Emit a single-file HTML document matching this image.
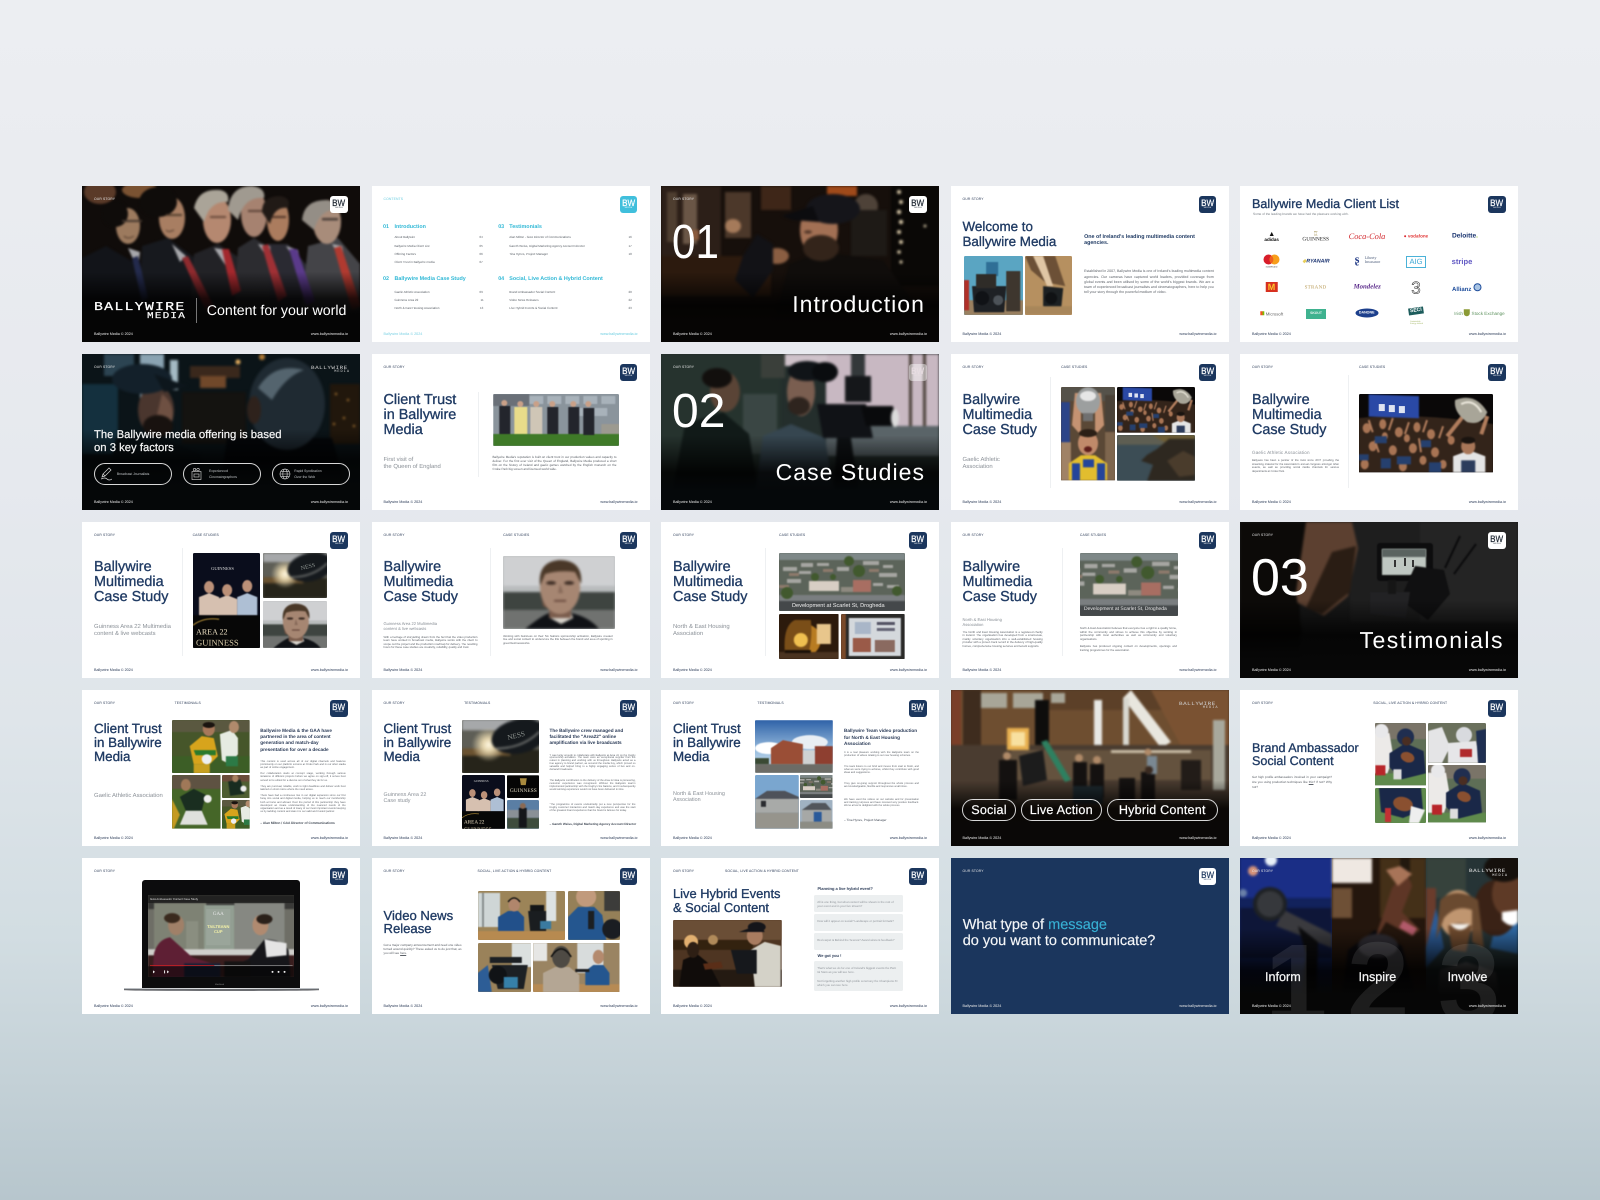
<!DOCTYPE html>
<html lang="en"><head><meta charset="utf-8"><title>Ballywire Media</title>
<style>
html,body{margin:0;padding:0}
body{width:1600px;height:1200px;overflow:hidden;position:relative;background:linear-gradient(180deg,#eceef2 0,#eaecf0 15%,#e6e9ee 40%,#dfe5ea 60%,#d2dde2 78%,#c4d1d7 90%,#b7c6cd 100%);font-family:"Liberation Sans",sans-serif;text-rendering:geometricPrecision}
.c{position:absolute;width:278px;height:156px;background:#fff;overflow:hidden;filter:blur(.28px);color:#1b365d}
.x1{left:82px}.x2{left:371.5px}.x3{left:661px}.x4{left:950.5px}.x5{left:1240px}
.y1{top:186px}.y2{top:354px}.y3{top:522px}.y4{top:690px}.y5{top:857.6px}
.t{position:absolute;white-space:nowrap;line-height:1}
.l{position:absolute;white-space:nowrap;line-height:1;top:12.3px;left:12px;font-size:3.4px;letter-spacing:.12px;color:#2c3c58}
.fl,.fr{position:absolute;white-space:nowrap;line-height:1;top:147.2px;font-size:3.7px;color:#2c3c58}
.fl{left:12px}.fr{right:12px}
.w .l,.w .fl,.w .fr{color:#e6e6e6}
.lg{position:absolute;left:248.4px;top:10px;width:17.3px;height:17.3px;background:#1b365d;border-radius:3px;color:#fff;text-align:center;overflow:hidden}
.lg b{display:block;font-weight:400;font-size:9.4px;line-height:9px;margin-top:2.2px;transform:scaleX(.86);-webkit-text-stroke:.2px currentColor}
.lg i{display:block;font-style:normal;font-size:2.1px;line-height:2.4px;letter-spacing:.22px;margin-top:.3px}
.lw{background:#fff;color:#1c2530}
.h{position:absolute;left:12px;margin-top:1.3px;font-weight:400;font-size:14.4px;line-height:15px;white-space:nowrap;color:#1f3a63;-webkit-text-stroke:.32px #1f3a63}
.h2{position:absolute;left:12px;top:32.2px;font-weight:400;font-size:13.4px;line-height:14px;white-space:nowrap;color:#1f3a63;-webkit-text-stroke:.32px #1f3a63}
.s{position:absolute;left:12px;font-size:5.9px;line-height:7px;color:#8a9097;white-space:nowrap}
.d{position:absolute;width:.4px;background:#eef0f2}
.bd{position:absolute;font-size:3.05px;line-height:4.3px;color:#5c6168;text-align:justify}
.sh{position:absolute;font-weight:700;font-size:4.7px;line-height:6.35px;color:#2c3c58;white-space:nowrap}
.p{position:absolute;border-radius:1.3px;display:block;overflow:hidden}
.ov{position:absolute;left:0;top:0;width:100%;height:100%}
.ph{position:absolute;left:0;top:0;width:278px;height:156px;display:block}
.num{position:absolute;left:11px;top:29.5px;color:#fff;font-size:48px;line-height:54px;transform-origin:left center}
.big{position:absolute;right:14px;top:104px;color:#fff;font-size:23px;line-height:28px;letter-spacing:1.05px;white-space:nowrap}
.wm{position:absolute;font-family:"Liberation Mono",monospace;white-space:nowrap;line-height:1;color:#cfcfcf;transform-origin:left center}
.pill{position:absolute;top:109.3px;height:21.4px;border:.6px solid #d8d8d8;border-radius:11px;box-sizing:border-box;color:#fff;white-space:nowrap}
.pt{position:absolute;left:22px;font-size:3.4px;line-height:5.4px;color:#c4c7ca;top:5.2px}
.pb{text-align:center;font-size:12.6px;line-height:20.6px;letter-spacing:.2px;-webkit-text-stroke:.2px #fff}
.ci{color:#2fb8d6;font-weight:700;font-size:5.4px}
.it{position:absolute;font-size:3px;line-height:1;white-space:nowrap;color:#5c6269}
.lo{position:absolute;line-height:1;white-space:nowrap;transform:translate(-50%,-50%)}
.bx{position:absolute;left:153px;width:88.5px;background:#eceff0;border-radius:1.5px;font-size:2.9px;line-height:4.1px;color:#8c9197;box-sizing:border-box;padding:5px 3.2px}
.lb{font-size:12.6px;color:#f2f2f2;-webkit-text-stroke:.25px #fff;top:113.7px}
</style></head><body>

<svg width="0" height="0" style="position:absolute">
<defs>
<linearGradient id="skyb" x1="0" y1="0" x2="0" y2="1"><stop offset="0" stop-color="#2f62a8"/><stop offset=".6" stop-color="#9cc0e0"/><stop offset="1" stop-color="#d6e4ee"/></linearGradient>
<radialGradient id="sun"><stop offset="0" stop-color="#fff8e2"/><stop offset=".35" stop-color="#e4d4ac"/><stop offset="1" stop-color="#e4d4ac" stop-opacity="0"/></radialGradient>
</defs>

<symbol id="ball" viewBox="0 0 64 45" preserveAspectRatio="xMidYMid slice">
<rect width="64" height="45" fill="#5e5e56"/>
<g style="filter:blur(1.2px)"><rect width="64" height="9" fill="#a6a8aa"/><rect y="25" width="64" height="20" fill="#26241a"/><rect y="24" width="40" height="6" fill="#6a5230"/><circle cx="22" cy="21" r="14" fill="url(#sun)"/><ellipse cx="47" cy="14" rx="23" ry="14" transform="rotate(-12 47 14)" fill="#15191d"/><path d="M28 24Q50 24 64 10" fill="none" stroke="#8a8c88" stroke-width="1.2"/></g>
<text x="38" y="17" font-size="6" fill="#8e9490" font-family="Liberation Serif" transform="rotate(-14 38 17)">NESS</text>
</symbol>

<symbol id="jack" viewBox="0 0 112 73" preserveAspectRatio="xMidYMid slice">
<rect width="112" height="73" fill="#b9bcbd"/>
<g style="filter:blur(1.4px)"><rect width="112" height="30" fill="#cfd0d2"/><rect y="36" width="112" height="18" fill="#3e4440"/><rect y="54" width="112" height="19" fill="#707270"/><path d="M22 73Q38 60 46 57L68 57Q86 61 96 73Z" fill="#101216"/><path d="M47 62L58 68L70 62L68 57H47Z" fill="#d8d4cc"/><rect x="46" y="44" width="22" height="18" fill="#7a5c4c"/><ellipse cx="57" cy="32" rx="20" ry="26" fill="#a68672"/><path d="M37 30Q34 6 56 4Q80 4 78 28L72 16Q56 14 42 18Z" fill="#4a3828"/><ellipse cx="48" cy="27" rx="5" ry="1.8" fill="#3a2a22"/><ellipse cx="66" cy="27" rx="5" ry="1.8" fill="#3a2a22"/><path d="M57 28L55 37H60Z" fill="#866858"/><rect x="51" y="44" width="12" height="1.6" fill="#5e3e34"/><path d="M37 34Q40 52 50 56L40 50Z" fill="#6e5040"/></g>
</symbol>

<symbol id="crowd" viewBox="0 0 134 78" preserveAspectRatio="xMidYMid slice">
<rect width="134" height="78" fill="#0a0808"/>
<g style="filter:blur(.7px)">
<path d="M0 24Q60 18 134 30V78H0Z" fill="#33241a"/>
<g fill="#a87454"><ellipse cx="8" cy="34" rx="4" ry="5"/><ellipse cx="24" cy="30" rx="3.5" ry="5"/><ellipse cx="40" cy="38" rx="4" ry="5"/><ellipse cx="58" cy="33" rx="3.5" ry="5"/><ellipse cx="72" cy="40" rx="4" ry="5"/><ellipse cx="14" cy="52" rx="4" ry="5"/><ellipse cx="34" cy="56" rx="4" ry="5"/><ellipse cx="54" cy="54" rx="4" ry="5"/><ellipse cx="76" cy="58" rx="4" ry="5"/><ellipse cx="92" cy="46" rx="3.5" ry="4.5"/><ellipse cx="6" cy="70" rx="4" ry="5"/><ellipse cx="44" cy="72" rx="4" ry="5"/><ellipse cx="26" cy="42" rx="3" ry="4"/><ellipse cx="64" cy="66" rx="3.5" ry="4.5"/><ellipse cx="84" cy="70" rx="3.5" ry="4.5"/><ellipse cx="48" cy="44" rx="3" ry="4"/></g>
<g stroke="#b07c5c" stroke-width="2" fill="none"><path d="M14 38L10 26M30 36L34 24M46 40L50 28M64 38L68 26M80 44L84 32M20 58L16 46M62 58L60 44"/></g>
<g fill="#26406e"><rect x="16" y="42" width="12" height="7"/><rect x="62" y="46" width="10" height="7"/><rect x="0" y="60" width="10" height="6"/><rect x="38" y="62" width="14" height="8"/><rect x="70" y="68" width="12" height="10"/><rect x="22" y="64" width="10" height="10"/></g>
<path d="M88 42L104 22M122 40L128 22" stroke="#b07c5c" stroke-width="4" fill="none"/>
<path d="M94 78V62L110 56L126 62V78Z" fill="#e4e4e4"/><rect x="102" y="66" width="14" height="12" fill="#2c3c5c"/><ellipse cx="109" cy="52" rx="7" ry="8" fill="#a87658"/><ellipse cx="109" cy="46" rx="7" ry="3.5" fill="#1a1410"/>
<rect x="10" y="0" width="50" height="22" fill="#2a49a6" transform="skewY(2)"/>
<path d="M96 6Q116 -2 128 18Q122 32 108 28Q94 18 96 6Z" fill="#a8a598"/><path d="M102 10Q114 4 122 18" stroke="#ece8dc" stroke-width="2" fill="none"/>
</g>
<g fill="#fff" opacity=".85"><rect x="20" y="10" width="6" height="7"/><rect x="30" y="11" width="6" height="7"/><rect x="40" y="12" width="6" height="7"/></g>
</symbol>

<symbol id="player" viewBox="0 0 54 93" preserveAspectRatio="xMidYMid slice">
<rect width="54" height="93" fill="#5a4836"/>
<g style="filter:blur(.7px)">
<rect width="54" height="14" fill="#55524a"/><rect width="9" height="50" y="15" fill="#2c4488"/><rect x="0" y="55" width="10" height="38" fill="#a08266"/><rect x="44" y="45" width="10" height="48" fill="#7e664e"/><rect x="44" y="8" width="10" height="36" fill="#4a4238"/>
<path d="M11 38L14 6H20L20 48ZM43 38L40 6H34L34 48Z" fill="#c49272"/>
<ellipse cx="27" cy="14" rx="12" ry="14" fill="#9c9f9f"/><ellipse cx="27" cy="9" rx="8" ry="5" fill="#e6e6e6"/><rect x="22" y="26" width="10" height="8" fill="#707070"/>
<ellipse cx="27" cy="56" rx="10" ry="12" fill="#c08a6a"/><ellipse cx="27" cy="46" rx="9" ry="4" fill="#2b1f16"/><ellipse cx="27" cy="62" rx="4" ry="3" fill="#5e1e1a"/>
<path d="M8 93V76L20 68H34L46 76V93Z" fill="#e2bd2e"/><rect x="11" y="76" width="8" height="17" fill="#24459a"/><rect x="36" y="76" width="8" height="17" fill="#24459a"/><rect x="22" y="72" width="11" height="8" fill="#24459a"/>
</g></symbol>

<symbol id="cliff" viewBox="0 0 78 46" preserveAspectRatio="xMidYMid slice">
<rect width="78" height="46" fill="#3c4d55"/>
<g style="filter:blur(1px)"><rect width="78" height="10" fill="#5e5e52"/><path d="M34 0H78V12H56Z" fill="#6e5e36"/><path d="M52 4L40 14L30 20L24 26L36 30L30 46H78V4Z" fill="#2e2820"/><path d="M50 26L66 16L78 22V40L62 42Z" fill="#4a3c2c"/></g></symbol>

<symbol id="panel" viewBox="0 0 67 95" preserveAspectRatio="xMidYMid slice">
<rect width="67" height="95" fill="#0a0d1c"/>
<g style="filter:blur(.6px)">
<g fill="#d6c0b0"><path d="M6 62V44L16 40L26 44V62Z"/><path d="M24 62V46L34 42L44 46V62Z"/><path d="M44 62V44L54 40L64 44V62Z" fill="#aebfd4"/></g>
<g fill="#bb9078"><ellipse cx="16" cy="34" rx="5" ry="6"/><ellipse cx="34" cy="37" rx="5" ry="6"/><ellipse cx="54" cy="33" rx="5" ry="6"/></g>
<rect y="62" width="67" height="33" fill="#070707"/><path d="M0 72Q10 64 26 66" stroke="#9a7a30" stroke-width="1.2" fill="none"/></g>
<text x="18" y="17" font-size="4.6" fill="#ddd" font-family="Liberation Serif">GUINNESS</text>
<text x="3" y="81" font-size="8" fill="#e8dcc0" font-family="Liberation Serif">AREA 22</text>
<text x="3" y="92" font-size="8.6" fill="#d4c8a6" font-family="Liberation Serif">GUINNESS</text>
</symbol>

<symbol id="aerial" viewBox="0 0 126 58" preserveAspectRatio="xMidYMid slice">
<rect width="126" height="58" fill="#5c645a"/>
<g style="filter:blur(.7px)">
<rect width="126" height="7" fill="#7e8888"/><rect y="42" width="126" height="6" fill="#7a7e80"/><rect y="48" width="126" height="10" fill="#44484a"/>
<g fill="#a6a6a2"><rect x="4" y="14" width="14" height="4"/><rect x="22" y="10" width="12" height="4"/><rect x="58" y="14" width="12" height="4"/><rect x="84" y="8" width="16" height="4"/><rect x="100" y="20" width="18" height="4"/><rect x="8" y="26" width="14" height="4"/><rect x="38" y="10" width="12" height="3"/><rect x="104" y="12" width="10" height="3"/><rect x="94" y="30" width="10" height="3"/><rect x="108" y="32" width="12" height="3"/><rect x="20" y="18" width="12" height="3"/></g>
<g fill="#8e7a6c"><rect x="10" y="20" width="10" height="3"/><rect x="44" y="16" width="10" height="3"/><rect x="90" y="16" width="10" height="3"/><rect x="0" y="32" width="10" height="3"/></g>
<g fill="#41592e"><circle cx="8" cy="40" r="6"/><circle cx="80" cy="18" r="6"/><circle cx="70" cy="8" r="5"/><circle cx="36" cy="24" r="4"/><circle cx="118" cy="38" r="5"/><circle cx="54" cy="24" r="3"/></g>
<rect x="30" y="28" width="30" height="10" fill="#d8cec4"/><rect x="74" y="27" width="18" height="12" fill="#a86e62"/><rect x="62" y="34" width="12" height="5" fill="#8e8a80"/></g></symbol>

<symbol id="kettle" viewBox="0 0 60 45" preserveAspectRatio="xMidYMid slice">
<rect width="60" height="45" fill="#2c1a0c"/><g style="filter:blur(.8px)"><circle cx="26" cy="26" r="16" fill="#b87c22"/><rect x="38" y="10" width="14" height="20" fill="#e8c68c"/><path d="M6 38Q4 12 16 6L32 6Q34 22 30 38Z" fill="#7a4e18"/><circle cx="22" cy="26" r="7" fill="#f0c050"/><rect x="0" y="38" width="60" height="7" fill="#4a3320"/><rect x="6" y="36" width="26" height="3" fill="#1a1008"/></g></symbol>

<symbol id="sign" viewBox="0 0 64 45" preserveAspectRatio="xMidYMid slice">
<rect width="64" height="45" fill="#2a2a28"/><g style="filter:blur(.6px)"><rect x="8" y="4" width="52" height="38" fill="#d4d8dc"/><rect x="12" y="24" width="18" height="14" fill="#9a5a48"/><rect x="34" y="26" width="20" height="12" fill="#8a6a60"/><rect x="14" y="8" width="16" height="12" fill="#a9b6c8"/><rect x="36" y="8" width="18" height="3" fill="#556"/><rect x="36" y="14" width="18" height="3" fill="#667"/><rect x="0" y="0" width="5" height="45" fill="#7a4a2a"/></g></symbol>

<symbol id="gaa1" viewBox="0 0 78 53" preserveAspectRatio="xMidYMid slice">
<rect width="78" height="53" fill="#46562a"/>
<g style="filter:blur(.6px)"><rect width="78" height="12" fill="#5a5840"/><rect y="36" width="78" height="17" fill="#3c5e26"/>
<path d="M48 14L60 10L66 18V34L58 44L50 40Z" fill="#e6ebe2"/><ellipse cx="62" cy="7" rx="5" ry="6" fill="#b08a6c"/><rect x="54" y="36" width="12" height="10" fill="#2c7a46"/>
<path d="M18 26L30 16L42 18L46 36L38 44H22Z" fill="#d7a41c"/><path d="M22 30L44 30L44 35L24 35Z" fill="#2a7a2c"/><ellipse cx="37" cy="9" rx="6" ry="7" fill="#a8785a"/><ellipse cx="37" cy="5" rx="6" ry="3" fill="#1a1410"/><rect x="22" y="44" width="16" height="9" fill="#c8a020"/><circle cx="35" cy="39" r="5" fill="#eceff2"/></g></symbol>

<symbol id="gaa2" viewBox="0 0 49 54" preserveAspectRatio="xMidYMid slice">
<rect width="49" height="54" fill="#456628"/><g style="filter:blur(.6px)"><rect width="49" height="14" fill="#5e5242"/><path d="M8 22L22 14L34 20L30 36L14 36Z" fill="#1a2e20"/><ellipse cx="14" cy="10" rx="5" ry="6" fill="#a07858"/><path d="M14 36L30 36L36 50L8 50Z" fill="#dfe0dc"/><circle cx="36" cy="24" r="4" fill="#eee"/><path d="M0 24L8 40L2 54H0Z" fill="#c49a20"/></g></symbol>

<symbol id="gaa3" viewBox="0 0 27 26" preserveAspectRatio="xMidYMid slice">
<rect width="27" height="26" fill="#4e5e32"/><g style="filter:blur(.5px)"><rect width="27" height="8" fill="#6a4c3a"/><path d="M6 8L18 6L22 20L8 22Z" fill="#182c20"/><ellipse cx="13" cy="5" rx="3" ry="3.6" fill="#a88060"/><circle cx="21" cy="15" r="3" fill="#eee"/></g></symbol>

<symbol id="fb" viewBox="0 0 58 62" preserveAspectRatio="xMidYMid slice">
<rect width="58" height="62" fill="#5e6e56"/><g style="filter:blur(.5px)"><rect width="58" height="16" fill="#7a7468"/><rect y="50" width="58" height="12" fill="#5f8a4c"/>
<path d="M0 10H18L22 34L16 50H0Z" fill="#eceae8"/><circle cx="10" cy="8" r="7" fill="#e8e8ea"/><rect x="4" y="42" width="10" height="10" fill="#b8262a"/>
<path d="M18 30L34 20L52 28L54 50L30 56L18 44Z" fill="#1a2848"/><circle cx="34" cy="14" r="8.5" fill="#202e50"/><circle cx="35" cy="18" r="4.5" fill="#4a2e22"/><ellipse cx="36" cy="34" rx="7" ry="5" fill="#8a5030" transform="rotate(20 36 34)"/><rect x="22" y="46" width="8" height="10" fill="#ddd"/></g></symbol>

<symbol id="vid1" viewBox="0 0 87 49" preserveAspectRatio="xMidYMid slice">
<rect width="87" height="49" fill="#9c8458"/><g style="filter:blur(.5px)"><rect x="0" y="2" width="22" height="34" fill="#cfd6d6"/><rect x="4" y="2" width="2" height="34" fill="#8a9090"/><rect x="68" y="0" width="10" height="30" fill="#dde2e2"/><rect y="40" width="87" height="9" fill="#b78a50"/>
<path d="M20 40V26L30 20H40L46 26V40Z" fill="#22508a"/><ellipse cx="36" cy="14" rx="5.6" ry="6.5" fill="#b0866c"/><path d="M30 11Q36 3 42 11" stroke="#111" stroke-width="1.4" fill="none"/>
<path d="M50 20H68V40H52Z" fill="#1a1d20"/><rect x="52" y="14" width="14" height="6" fill="#141618"/><rect x="62" y="30" width="11" height="8" fill="#3a7aa0"/></g></symbol>

<symbol id="vid2" viewBox="0 0 52 49" preserveAspectRatio="xMidYMid slice">
<rect width="52" height="49" fill="#958058"/><g style="filter:blur(.5px)"><rect x="36" width="16" height="20" fill="#3c3c3a"/><path d="M0 49V26L10 16H26L34 24L38 49Z" fill="#24568f"/><ellipse cx="18" cy="6" rx="10" ry="10" fill="#c19a7c"/><rect x="20" y="20" width="6" height="18" fill="#1c1f22"/><circle cx="44" cy="38" r="10" fill="#1a1d22"/></g></symbol>

<symbol id="vid3" viewBox="0 0 54 49" preserveAspectRatio="xMidYMid slice">
<rect width="54" height="49" fill="#9a825a"/><g style="filter:blur(.5px)"><rect x="34" width="20" height="24" fill="#dbe0df"/><path d="M0 30L10 22L14 49H0Z" fill="#2d5d96"/><path d="M12 14H44V20H12ZM14 22H50L46 46H20Z" fill="#1c2024"/><circle cx="20" cy="32" r="9" fill="#101316"/><rect x="26" y="34" width="14" height="11" fill="#3680a8"/></g></symbol>

<symbol id="vid4" viewBox="0 0 86 49" preserveAspectRatio="xMidYMid slice">
<rect width="86" height="49" fill="#9a8462"/><g style="filter:blur(.5px)"><rect x="44" width="26" height="30" fill="#d8dcdc"/><rect y="0" width="14" height="18" fill="#e6e6e4"/><rect y="41" width="86" height="8" fill="#b68a54"/><path d="M10 49V30L22 24H36L46 32V49Z" fill="#b4a694"/><ellipse cx="28" cy="14" rx="9" ry="11" fill="#4e4a44"/><path d="M18 14Q28 -2 38 14" stroke="#111" stroke-width="1.5" fill="none"/>
<path d="M52 42V28L60 22H70L76 30V42Z" fill="#24568f"/><ellipse cx="65" cy="14" rx="5.5" ry="7" fill="#b48a6e"/><rect x="42" y="26" width="14" height="3" fill="#1d1f22"/></g></symbol>
</svg>

<!-- R1 -->
<div class="c x1 y1 w">
<svg class="ph" viewBox="0 0 278 156"><rect width="278" height="156" fill="#100c0a"/>
<g style="filter:blur(1px)">
<ellipse cx="18" cy="6" rx="16" ry="12" fill="#5a3a28"/><ellipse cx="58" cy="4" rx="18" ry="8" fill="#7a5232"/>
<path d="M0 156V72L24 60L58 80L92 156Z" fill="#121419"/>
<path d="M55 156L60 60L86 52L118 76L142 156Z" fill="#17191e"/>
<path d="M105 156L112 68L136 58L170 80L186 156Z" fill="#222226"/>
<path d="M150 156L156 62L172 52L202 70L226 156Z" fill="#2c2c30"/>
<path d="M190 156L186 58L206 58L236 92L246 156Z" fill="#2a2a32"/>
<path d="M216 156L226 60L256 52L278 78V156Z" fill="#444448"/>
<path d="M46 62L58 66L56 84Z M90 58L104 70L98 76Z M132 62L146 64L144 80Z M176 58L188 60L190 78Z M204 60L216 64L220 84Z M250 58L260 60L264 82Z" fill="#a8a8ac"/>
<path d="M50 72L56 70L66 112L60 116Z" fill="#232a4c"/>
<path d="M100 72L106 70L134 125L126 130Z" fill="#8e2a2e"/><path d="M140 63L147 63L159 105L150 110Z" fill="#a3282d"/><path d="M180 60L186 58L205 110L196 116Z" fill="#a03035"/><path d="M207 63L215 63L233 115L224 120Z" fill="#5a3a8a"/><path d="M252 62L259 60L279 120L270 125Z" fill="#b03a30"/>
<ellipse cx="46" cy="40" rx="12" ry="18" fill="#9c7a5e"/><ellipse cx="33" cy="28" rx="13" ry="13" fill="#0f0c0a"/><rect x="40" y="34" width="20" height="2" fill="#44372e"/><path d="M52 50Q46 54 42 50" stroke="#553d2e" fill="none"/>
<ellipse cx="90" cy="32" rx="13" ry="21" fill="#a87e62"/><ellipse cx="76" cy="16" rx="19" ry="15" fill="#0f0c0a"/><rect x="84" y="28" width="16" height="2" fill="#54402f"/><path d="M92 44Q86 47 84 44" stroke="#553d2e" fill="none"/>
<ellipse cx="135" cy="34" rx="14" ry="23" fill="#b58870"/><path d="M112 22Q116 2 138 4Q148 6 146 16Q128 14 122 36Z" fill="#aaa498"/><rect x="128" y="30" width="16" height="2" fill="#6a4c3c"/>
<ellipse cx="172" cy="28" rx="13" ry="23" fill="#a68270"/><path d="M146 24Q148 0 170 0Q184 2 182 12Q162 10 156 34Z" fill="#a09a90"/><rect x="166" y="24" width="14" height="2" fill="#5e4438"/>
<ellipse cx="196" cy="34" rx="11" ry="21" fill="#ab7c5e"/><path d="M180 26Q180 10 198 10Q210 12 206 22Q192 20 188 38Z" fill="#211a16"/><rect x="190" y="30" width="14" height="2" fill="#54382a"/>
<ellipse cx="245" cy="36" rx="14" ry="22" fill="#a88c7a"/><path d="M220 34Q222 14 244 14Q258 16 256 24Q238 22 232 44Z" fill="#948e86"/><rect x="240" y="32" width="16" height="2.4" fill="#4a3e38"/>
</g></svg>
<div class="ov" style="background:linear-gradient(180deg,rgba(0,0,0,0) 55%,rgba(0,0,0,.8) 72%,#050505 82%)"></div>
<div class="l">OUR STORY</div>
<div class="lg lw"><b>BW</b><i>MEDIA</i></div>
<div class="wm" style="left:12px;top:115px;font-size:12px;letter-spacing:1px;color:#fff;transform:scaleX(1.24);-webkit-text-stroke:.25px #fff">BALLYWIRE</div>
<div class="wm" style="left:65px;top:126px;font-size:9px;letter-spacing:1px;color:#fff;transform:scaleX(1.22);-webkit-text-stroke:.2px #fff">MEDIA</div>
<div class="d" style="left:114.4px;top:112px;height:25px;background:#777"></div>
<div class="t" style="left:124.8px;top:118px;font-size:14.2px;color:#fff">Content for your world</div>
<div class="fl">Ballywire Media © 2024</div><div class="fr">www.ballywiremedia.ie</div>
</div>

<div class="c x2 y1" style="color:#2fb8d6">
<div class="l" style="color:#6ccde0">CONTENTS</div>
<div class="lg" style="background:#40bfdc"><b>BW</b><i>MEDIA</i></div>
<div class="t ci" style="left:11.5px;top:39px">01</div><div class="t ci" style="left:23px;top:39px">Introduction</div>
<div class="it" style="left:23px;top:50.2px">About Ballywire</div><div class="it" style="left:108px;top:50.2px">04</div>
<div class="it" style="left:23px;top:58.5px">Ballywire Media Client List</div><div class="it" style="left:108px;top:58.5px">05</div>
<div class="it" style="left:23px;top:66.8px">Offering Factors</div><div class="it" style="left:108px;top:66.8px">06</div>
<div class="it" style="left:23px;top:75.1px">Client Trust in Ballywire media</div><div class="it" style="left:108px;top:75.1px">07</div>
<div class="t ci" style="left:11.5px;top:91.3px">02</div><div class="t ci" style="left:23px;top:91.3px">Ballywire Media Case Study</div>
<div class="it" style="left:23px;top:104.8px">Gaelic Athletic Association</div><div class="it" style="left:108px;top:104.8px">09</div>
<div class="it" style="left:23px;top:113px">Guinness Area 22</div><div class="it" style="left:109px;top:113px">11</div>
<div class="it" style="left:23px;top:121.2px">North &amp; East Housing Association</div><div class="it" style="left:108.5px;top:121.2px">13</div>
<div class="t ci" style="left:126.7px;top:38.7px">03</div><div class="t ci" style="left:137.8px;top:38.7px">Testimonials</div>
<div class="it" style="left:137.8px;top:50.2px">Alan Milton - GAA Director of Communications</div><div class="it" style="left:257px;top:50.2px">16</div>
<div class="it" style="left:137.8px;top:58.5px">Gareth Weiss, Digital Marketing Agency Account Director</div><div class="it" style="left:257px;top:58.5px">17</div>
<div class="it" style="left:137.8px;top:66.8px">Tina Hynes, Project Manager</div><div class="it" style="left:257px;top:66.8px">18</div>
<div class="t ci" style="left:126.7px;top:91px">04</div><div class="t ci" style="left:137.8px;top:91px">Social, Live Action &amp; Hybrid Content</div>
<div class="it" style="left:137.8px;top:104.8px">Brand Ambassador Social Content</div><div class="it" style="left:257px;top:104.8px">20</div>
<div class="it" style="left:137.8px;top:113px">Video News Releases</div><div class="it" style="left:257px;top:113px">22</div>
<div class="it" style="left:137.8px;top:121.2px">Live Hybrid Events &amp; Social Content</div><div class="it" style="left:257px;top:121.2px">23</div>
<div class="fl" style="color:#7ed2e4">Ballywire Media © 2024</div><div class="fr" style="color:#6ccde0">www.ballywiremedia.ie</div>
</div>

<div class="c x3 y1 w">
<svg class="ph" viewBox="0 0 278 156"><rect width="278" height="156" fill="#160f0b"/>
<g style="filter:blur(1.3px)">
<rect x="0" y="0" width="60" height="70" fill="#2c1f18"/><rect x="6" y="6" width="10" height="50" fill="#4e3e30"/><rect x="22" y="8" width="14" height="50" fill="#6a5646"/><rect x="64" y="6" width="26" height="46" fill="#4c382a"/><rect x="100" y="0" width="30" height="24" fill="#3e2618"/>
<rect x="166" y="0" width="30" height="10" fill="#a04a1a"/><circle cx="205" cy="20" r="12" fill="#4e4238"/><rect x="190" y="24" width="36" height="46" fill="#1e1a16"/>
<rect x="230" y="0" width="48" height="100" fill="#0a0806"/>
<g fill="#d8c8a8"><circle cx="238" cy="6" r="2"/><circle cx="240" cy="16" r="2"/><circle cx="238" cy="26" r="2.2"/><circle cx="240" cy="36" r="2.2"/><circle cx="238" cy="46" r="2"/><circle cx="240" cy="56" r="2"/><circle cx="238" cy="66" r="1.8"/><circle cx="240" cy="76" r="1.6"/><circle cx="262" cy="22" r="1.4"/><circle cx="264" cy="40" r="1.4"/></g>
<ellipse cx="72" cy="40" rx="8" ry="7" fill="#a57a5a"/><rect x="30" y="44" width="8" height="10" fill="#8a5a3c"/>
<rect y="70" width="110" height="40" fill="#2c1a0e"/>
<path d="M108 156L128 78L160 66L222 74L262 130V156Z" fill="#100d0b"/>
<ellipse cx="158" cy="44" rx="19" ry="27" fill="#a27054"/><ellipse cx="160" cy="62" rx="18" ry="13" fill="#33241a"/><ellipse cx="147" cy="46" rx="4" ry="1.6" fill="#4e3426"/>
<ellipse cx="172" cy="23" rx="27" ry="15" fill="#15151a"/><path d="M121 30L152 20L158 36L132 34Z" fill="#0c0c0f"/>
<ellipse cx="116" cy="70" rx="12" ry="8" fill="#8a5e42"/>
<path d="M82 70L96 48L112 58L112 84L92 112L74 94Z" fill="#121216"/>
</g></svg>
<div class="ov" style="background:linear-gradient(180deg,rgba(0,0,0,0) 55%,rgba(0,0,0,.8) 76%,#060504 88%)"></div>
<div class="l">OUR STORY</div><div class="lg lw"><b>BW</b><i>MEDIA</i></div>
<div class="num" style="transform:scaleX(.88)">01</div><div class="big">Introduction</div>
<div class="fl">Ballywire Media © 2024</div><div class="fr">www.ballywiremedia.ie</div>
</div>

<div class="c x4 y1">
<div class="l">OUR STORY</div><div class="lg"><b>BW</b><i>MEDIA</i></div>
<div class="h" style="top:32.7px;font-size:13.4px;line-height:14.7px">Welcome to<br>Ballywire Media</div>
<svg class="p" style="left:13px;top:70px;width:59.3px;height:59.3px" viewBox="0 0 59 59"><rect width="59" height="59" fill="#5aa5c2"/><g style="filter:blur(.6px)"><rect y="44" width="59" height="15" fill="#9a8060"/><rect x="0" y="24" width="5" height="30" fill="#b03028"/><rect x="42" y="15" width="14" height="40" fill="#3e362e"/><path d="M8 30H42L40 56H10Z" fill="#1e2125"/><rect x="22" y="6" width="12" height="14" fill="#2f6f96"/><rect x="12" y="18" width="20" height="14" fill="#2f2c28"/><circle cx="18" cy="42" r="7" fill="#101216"/><circle cx="34" cy="44" r="5" fill="#4c5258"/></g></svg>
<svg class="p" style="left:74px;top:70px;width:47.3px;height:59.3px" viewBox="0 0 47 59"><rect width="47" height="59" fill="#b69060"/><g style="filter:blur(.7px)"><path d="M0 0H30L40 30L20 26L6 14Z" fill="#6c5036"/><path d="M8 0L18 0L28 30L22 30Z" fill="#e0c6a4"/><path d="M18 30L38 32L36 52L18 50Z" fill="#1c2022"/><circle cx="26" cy="42" r="6" fill="#101214"/><path d="M0 58H47V50H0Z" fill="#a8865a"/></g></svg>
<div class="sh" style="left:133.6px;top:48px;font-size:5.35px;line-height:6.2px;color:#1f3a63">One of Ireland's leading multimedia content<br>agencies.</div>
<div class="bd" style="left:133.6px;top:83.4px;width:129.7px;font-size:3.55px;line-height:5.25px">Established in 2007, Ballywire Media is one of Ireland's leading multimedia content agencies. Our cameras have captured world leaders, provided coverage from global events and been utilised by some of the world's biggest brands. We are a team of experienced broadcast journalists and cinematographers, here to help you tell your story through the powerful medium of video.</div>
<div class="fl">Ballywire Media © 2024</div><div class="fr">www.ballywiremedia.ie</div>
</div>

<div class="c x5 y1">
<div class="lg"><b>BW</b><i>MEDIA</i></div>
<div class="t" style="left:12px;top:12.2px;font-size:12.6px;color:#1f3a63;-webkit-text-stroke:.32px #1f3a63">Ballywire Media Client List</div>
<div class="t" style="left:13px;top:27.4px;font-size:3.2px;color:#7c8288">Some of the leading brands we have had the pleasure working with.</div>
<div class="lo" style="left:31.7px;top:50.5px;font-size:4.6px;font-weight:700;color:#111;text-align:center;line-height:4px"><span style="display:block;font-size:7px;line-height:6px">▲</span>adidas</div>
<div class="lo" style="left:75.7px;top:50.5px;font-family:'Liberation Serif',serif;font-size:5.4px;color:#222;text-align:center"><span style="display:block;color:#9a8540;font-size:6px;line-height:6px">♖</span>GUINNESS</div>
<div class="lo" style="left:127px;top:51px;font-family:'Liberation Serif',serif;font-style:italic;font-size:8.4px;color:#d2282e">Coca-Cola</div>
<div class="lo" style="left:176px;top:50.5px;font-size:4.6px;font-weight:700;color:#e23a3a"><span style="color:#d8232a">●</span> vodafone</div>
<div class="lo" style="left:225px;top:50.7px;font-size:6.6px;font-weight:700;color:#17326e">Deloitte<span style="color:#86bc25">.</span></div>
<svg style="position:absolute;left:23px;top:68px" width="17" height="15" viewBox="0 0 17 15"><circle cx="5.5" cy="5.5" r="5" fill="#d81d2a"/><circle cx="11.5" cy="5.5" r="5" fill="#f79e1b"/><path d="M8.5 1.6A5 5 0 0 1 8.5 9.4A5 5 0 0 1 8.5 1.6Z" fill="#f0611f"/><text x="8.5" y="13.6" font-size="2.3" text-anchor="middle" fill="#333" font-family="Liberation Sans">mastercard</text></svg>
<div class="lo" style="left:76px;top:75.5px;font-size:5.2px;font-weight:700;font-style:italic;color:#17306e"><span style="color:#e8cf5a">◆</span>RYANAIR</div>
<div class="lo" style="left:127.5px;top:74.5px;font-family:'Liberation Serif',serif;font-size:4px;line-height:4.8px;color:#4a5a78;padding-left:10px">Liberty<br>Insurance<span style="position:absolute;left:0;top:-3px;font-size:12px;line-height:12px;color:#28408a;font-weight:700">ʂ</span></div>
<div class="lo" style="left:176px;top:75.5px;width:18px;height:10px;border:.6px solid #4ab2d8;color:#3fa8d4;font-size:7.6px;line-height:10px;text-align:center">AIG</div>
<div class="lo" style="left:222px;top:75.5px;font-size:7.6px;font-weight:700;color:#635bc4">stripe</div>
<div class="lo" style="left:31.5px;top:101.3px;width:12.5px;height:10px;background:#d7301f;color:#ffc72c;font-size:9px;font-weight:700;line-height:10px;text-align:center;overflow:hidden">M</div>
<div class="lo" style="left:75.5px;top:102px;font-family:'Liberation Serif',serif;font-size:5px;color:#b89a56;letter-spacing:.3px">STRAND</div>
<div class="lo" style="left:127.2px;top:102px;font-family:'Liberation Serif',serif;font-style:italic;font-weight:700;font-size:6.8px;color:#5a2a8a">Mondelez</div>
<div class="lo" style="left:176px;top:102px;font-size:17px;font-weight:400;color:#fff;-webkit-text-stroke:.5px #222">3</div>
<div class="lo" style="left:226.5px;top:101.5px;font-size:6px;font-weight:700;color:#1f4e9c">Allianz <span style="display:inline-block;width:6px;height:6px;border:.6px solid #1f4e9c;border-radius:50%;vertical-align:-.5px;background:#a8c4e4"></span></div>
<div class="lo" style="left:31.5px;top:127.5px;font-size:4.3px;color:#666"><span style="display:inline-block;width:4.8px;height:4.8px;background:linear-gradient(90deg,#f25022 50%,#7fba00 50%);vertical-align:-.6px"></span> Microsoft</div>
<div class="lo" style="left:76px;top:127.7px;width:20px;height:10px;background:#3fb28f;color:#e8f4f0;font-size:3.4px;font-weight:700;line-height:9px;text-align:center">SKOUT</div>
<div class="lo" style="left:126.7px;top:127px;width:23px;height:9px;border-radius:50%;background:#1c3f8c;color:#fff;font-size:3.6px;font-weight:700;line-height:9px;text-align:center">DANONE</div>
<div class="lo" style="left:176px;top:125px;width:15px;height:7px;background:#1d5c5c;color:#fff;font-size:5px;font-weight:700;line-height:7px;text-align:center;transform:translate(-50%,-50%) rotate(-8deg)">SECI</div>
<div class="t" style="left:170px;top:135px;font-size:2px;color:#a6b86a;line-height:2.3px">Sustainable<br>Energy Ireland</div>
<div class="lo" style="left:239.5px;top:127px;font-size:4.6px;color:#5f9360">Irish <span style="display:inline-block;width:6px;height:7.4px;background:#8b9a35;border-radius:0 0 3px 3px;vertical-align:-1.6px"></span> Stock Exchange</div>
<div class="fl">Ballywire Media © 2024</div><div class="fr">www.ballywiremedia.ie</div>
</div>

<!-- R2 -->
<div class="c x1 y2 w">
<svg class="ph" viewBox="0 0 278 156"><rect width="278" height="156" fill="#0b1418"/>
<g style="filter:blur(1.2px)">
<rect x="58" y="0" width="24" height="46" fill="#8aa3b2"/><rect x="22" y="0" width="30" height="22" fill="#2c4452"/><rect x="88" y="6" width="8" height="30" fill="#a4bac4"/>
<rect x="0" y="30" width="36" height="70" fill="#14303e"/><rect x="108" y="12" width="50" height="12" fill="#3a281c"/><rect x="118" y="22" width="26" height="12" fill="#70482a"/><circle cx="156" cy="8" r="2.5" fill="#e8b060"/><circle cx="180" cy="3" r="3" fill="#b47c36"/>
<rect x="100" y="38" width="64" height="52" fill="#141310"/>
<rect x="248" y="30" width="30" height="60" fill="#21170c"/>
<g fill="#dc9a40"><circle cx="252" cy="70" r="1"/><circle cx="262" cy="64" r="1"/><circle cx="272" cy="72" r="1"/><circle cx="266" cy="46" r="1"/><circle cx="254" cy="40" r="1"/></g>
<path d="M20 156L34 84L72 80L118 100L124 156Z" fill="#091014"/>
<ellipse cx="74" cy="56" rx="18" ry="25" fill="#4a362e"/><path d="M80 40Q94 50 90 68L82 82H70Z" fill="#6e5042"/><ellipse cx="76" cy="72" rx="15" ry="11" fill="#18120f"/>
<ellipse cx="60" cy="25" rx="30" ry="15" fill="#13202a"/><path d="M72 20L106 32L82 38Z" fill="#0d161c"/>
<path d="M135 156L145 84H250L270 156Z" fill="#04070a"/>
<ellipse cx="205" cy="50" rx="38" ry="46" fill="#1f2a32"/><path d="M176 34Q192 8 222 16Q204 22 190 46Z" fill="#54646e"/><ellipse cx="172" cy="56" rx="7" ry="14" fill="#2e221c"/>
</g></svg>
<div class="ov" style="background:linear-gradient(180deg,rgba(0,0,0,0) 48%,rgba(0,0,0,.75) 68%,#050708 85%)"></div>
<div class="l">OUR STORY</div>
<div class="wm" style="left:228.5px;top:11.7px;font-size:5px;letter-spacing:.4px;transform:scaleX(1.2)">BALLYWIRE</div><div class="wm" style="right:10px;top:17px;font-size:3.6px;letter-spacing:1px">MEDIA</div>
<div class="t" style="left:12px;top:74.5px;font-size:11.3px;line-height:13.3px;color:#f2f2f2;-webkit-text-stroke:.2px #fff">The Ballywire media offering is based<br>on 3 key factors</div>
<div class="pill" style="left:11.9px;width:78px"><svg style="position:absolute;left:6px;top:3px" width="11" height="14" viewBox="0 0 11 14" fill="none" stroke="#ddd" stroke-width=".7"><path d="M8 1L10 3L4 9L2 7ZM2 7L1 10L4 9M0 12Q4 10 6 12T11 12"/></svg><div class="pt" style="top:7.6px">Broadcast Journalists</div></div>
<div class="pill" style="left:101px;width:78px"><svg style="position:absolute;left:7px;top:4px" width="11" height="12" viewBox="0 0 11 12" fill="none" stroke="#ddd" stroke-width=".6"><rect x="1" y="3.5" width="9" height="8"/><circle cx="3.5" cy="1.6" r="1.3"/><circle cx="7" cy="1.6" r="1.3"/><rect x="3" y="6" width="5" height="3"/></svg><div class="pt" style="left:25px">Experienced<br>Cinematographers</div></div>
<div class="pill" style="left:189.8px;width:78px"><svg style="position:absolute;left:6px;top:4px" width="12" height="12" viewBox="0 0 12 12" fill="none" stroke="#ddd" stroke-width=".6"><circle cx="6" cy="6" r="5"/><ellipse cx="6" cy="6" rx="2.2" ry="5"/><path d="M1 6H11M1.8 3.4H10.2M1.8 8.6H10.2"/></svg><div class="pt" style="left:21.5px">Rapid Syndication<br>Over the Web</div></div>
<div class="fl">Ballywire Media © 2024</div><div class="fr">www.ballywiremedia.ie</div>
</div>

<div class="c x2 y2">
<div class="l">OUR STORY</div><div class="lg"><b>BW</b><i>MEDIA</i></div>
<div class="h" style="top:37.5px">Client Trust<br>in Ballywire<br>Media</div>
<div class="d" style="left:106px;top:38px;height:85px"></div>
<svg class="p" style="left:121px;top:40px;width:126.6px;height:52px" viewBox="0 0 126 52"><rect width="126" height="52" fill="#8a949c"/><g style="filter:blur(.6px)"><g fill="#a8b2ba"><rect x="36" y="2" width="14" height="8"/><rect x="54" y="2" width="14" height="8"/><rect x="72" y="2" width="14" height="8"/><rect x="90" y="2" width="14" height="8"/><rect x="108" y="2" width="14" height="8"/><rect x="80" y="14" width="14" height="8"/><rect x="100" y="14" width="14" height="8"/></g><rect y="0" width="36" height="12" fill="#6a7078"/><rect x="108" y="30" width="18" height="12" fill="#9c9a90"/><rect y="40" width="126" height="12" fill="#3f7a28"/>
<g fill="#23252c"><rect x="6" y="12" width="11" height="28"/><rect x="54" y="13" width="11" height="27"/><rect x="75" y="13" width="11" height="27"/><rect x="90" y="14" width="11" height="27"/></g><rect x="21" y="13" width="13" height="27" fill="#e8dc8a"/><rect x="37" y="13" width="12" height="27" fill="#cfc6b6"/>
<g fill="#c9a088"><circle cx="11" cy="9" r="3"/><circle cx="27" cy="10" r="3"/><circle cx="43" cy="10" r="3"/><circle cx="59" cy="10" r="3"/><circle cx="80" cy="10" r="3"/><circle cx="95" cy="10" r="3"/></g></g></svg>
<div class="bd" style="left:121px;top:100.5px;width:124px">Ballywire Media's reputation is built on client trust in our production values and capacity to deliver. For the first ever visit of the Queen of England, Ballywire Media produced a short film on the history of Ireland and gaelic games watched by the English monarch on the Croke Park big screen and licensed world wide.</div>
<div class="s" style="top:102.5px">First visit of<br>the Queen of England</div>
<div class="fl">Ballywire Media © 2024</div><div class="fr">www.ballywiremedia.ie</div>
</div>

<div class="c x3 y2 w">
<svg class="ph" viewBox="0 0 278 156"><rect width="278" height="156" fill="#242e2c"/>
<g style="filter:blur(1.2px)">
<rect x="0" y="0" width="120" height="156" fill="#26332e"/><rect x="165" y="0" width="113" height="90" fill="#c8b8c2"/><rect x="122" y="0" width="44" height="12" fill="#cfc2ca"/><rect x="100" y="0" width="24" height="24" fill="#3a3f3a"/>
<rect x="248" y="0" width="3" height="80" fill="#4a4038"/><rect x="262" y="0" width="3" height="80" fill="#4a4038"/><rect x="165" y="72" width="113" height="30" fill="#5a6468"/>
<rect x="82" y="40" width="34" height="60" fill="#3a4644"/>
<path d="M8 156L24 70L62 58L88 80L100 156Z" fill="#111a18"/><ellipse cx="64" cy="38" rx="15" ry="20" fill="#5a4436"/><ellipse cx="56" cy="24" rx="15" ry="10" fill="#120f0d"/>
<path d="M92 156L102 82L130 70L164 84L176 156Z" fill="#364650"/><ellipse cx="140" cy="38" rx="14" ry="24" fill="#7a5e50"/><ellipse cx="138" cy="52" rx="11" ry="9" fill="#2e241e"/><ellipse cx="146" cy="17" rx="19" ry="10" fill="#101418"/>
<ellipse cx="164" cy="18" rx="13" ry="10" fill="#0a0c0f"/><rect x="190" y="0" width="14" height="22" fill="#33383a"/><rect x="184" y="22" width="26" height="26" fill="#15171a"/>
<path d="M156 50H205L212 84H162Z" fill="#101216"/><path d="M200 52H232L236 72H205Z" fill="#090a0c"/><ellipse cx="234" cy="64" rx="4" ry="9" fill="#dcdcdc"/><path d="M176 84L190 84L200 156H172Z" fill="#0d1012"/>
</g></svg>
<div class="ov" style="background:linear-gradient(180deg,rgba(0,0,0,0) 52%,rgba(0,0,0,.85) 76%,#05080a 88%)"></div>
<div class="l">OUR STORY</div><div class="lg" style="background:rgba(255,255,255,.45);color:#e8dde2"><b>BW</b><i>MEDIA</i></div>
<div class="num" style="top:30.5px">02</div><div class="big">Case Studies</div>
<div class="fl">Ballywire Media © 2024</div><div class="fr">www.ballywiremedia.ie</div>
</div>

<div class="c x4 y2">
<div class="l">OUR STORY</div><div class="l" style="left:110.6px">CASE STUDIES</div><div class="lg"><b>BW</b><i>MEDIA</i></div>
<div class="h" style="top:37.5px">Ballywire<br>Multimedia<br>Case Study</div>
<div class="d" style="left:99.9px;top:22.7px;height:111px"></div>
<div class="s" style="top:102.5px">Gaelic Athletic<br>Association</div>
<svg class="p" style="left:110.6px;top:33.3px;width:54px;height:93.4px"><use href="#player"/></svg>
<svg class="p" style="left:166px;top:33.3px;width:78.2px;height:45.7px"><use href="#crowd"/></svg>
<svg class="p" style="left:166px;top:81px;width:78.2px;height:45.7px"><use href="#cliff"/></svg>
<div class="fl">Ballywire Media © 2024</div><div class="fr">www.ballywiremedia.ie</div>
</div>

<div class="c x5 y2">
<div class="l">OUR STORY</div><div class="l" style="left:119px">CASE STUDIES</div><div class="lg"><b>BW</b><i>MEDIA</i></div>
<div class="h" style="top:37.5px">Ballywire<br>Multimedia<br>Case Study</div>
<div class="d" style="left:108.3px;top:21px;height:113px"></div>
<div class="s" style="top:97.2px;font-size:4.6px;line-height:4.6px;letter-spacing:.15px">Gaelic Athletic Association</div>
<div class="bd" style="left:12px;top:105.3px;width:87px;font-size:2.7px;line-height:3.5px">Ballywire has been a partner of the GAA since 2007 providing the streaming material for the Association's annual congress amongst other events, as well as providing social media channels for various departments at Croke Park.</div>
<svg class="p" style="left:119.3px;top:40.3px;width:134px;height:78.4px"><use href="#crowd"/></svg>
<div class="fl">Ballywire Media © 2024</div><div class="fr">www.ballywiremedia.ie</div>
</div>

<!-- R3 -->
<div class="c x1 y3">
<div class="l">OUR STORY</div><div class="l" style="left:110.6px">CASE STUDIES</div><div class="lg"><b>BW</b><i>MEDIA</i></div>
<div class="h" style="top:37.2px">Ballywire<br>Multimedia<br>Case Study</div>
<div class="d" style="left:99.9px;top:26px;height:108px"></div>
<div class="s" style="top:102.2px">Guinness Area 22 Multimedia<br>content &amp; live webcasts</div>
<svg class="p" style="left:111px;top:31px;width:67.3px;height:95.3px"><use href="#panel"/></svg>
<svg class="p" style="left:180.6px;top:31px;width:64.4px;height:45.3px"><use href="#ball"/></svg>
<svg class="p" style="left:180.6px;top:79px;width:64.4px;height:47.3px"><use href="#jack"/></svg>
<div class="fl">Ballywire Media © 2024</div><div class="fr">www.ballywiremedia.ie</div>
</div>

<div class="c x2 y3">
<div class="l">OUR STORY</div><div class="l" style="left:131.6px">CASE STUDIES</div><div class="lg"><b>BW</b><i>MEDIA</i></div>
<div class="h" style="top:37.2px">Ballywire<br>Multimedia<br>Case Study</div>
<div class="d" style="left:118.6px;top:26px;height:108px"></div>
<div class="s" style="top:100.3px;font-size:4.1px;line-height:4.7px">Guinness Area 22 Multimedia<br>content &amp; live webcasts</div>
<div class="bd" style="left:12px;top:113.5px;width:94px;font-size:2.8px;line-height:3.5px">With a heritage of storytelling drawn from the fact that the video production team have worked in broadcast media, Ballywire works with the client to scope out the project and the production roadmap for delivery. The resulting hours for these case studies are creativity, reliability, quality and trust.</div>
<svg class="p" style="left:131.6px;top:34.3px;width:112.2px;height:73px"><use href="#jack"/></svg>
<div class="bd" style="left:131.6px;top:113.2px;width:109.5px;font-size:2.8px;line-height:3.2px">Working with Guinness on their Six Nations sponsorship activation, Ballywire created live and social content to underscore the link between the brand and area of sporting in great Guinnessworks.</div>
<div class="fl">Ballywire Media © 2024</div><div class="fr">www.ballywiremedia.ie</div>
</div>

<div class="c x3 y3">
<div class="l">OUR STORY</div><div class="l" style="left:118px">CASE STUDIES</div><div class="lg"><b>BW</b><i>MEDIA</i></div>
<div class="h" style="top:37.2px">Ballywire<br>Multimedia<br>Case Study</div>
<div class="d" style="left:103.7px;top:26px;height:108px"></div>
<div class="s" style="top:102.2px">North &amp; East Housing<br>Association</div>
<svg class="p" style="left:118px;top:31px;width:126px;height:58px"><use href="#aerial"/></svg>
<div class="t" style="left:131px;top:81.9px;font-size:5.6px;color:#eee">Development at Scarlet St, Drogheda</div>
<svg class="p" style="left:118px;top:91.7px;width:59.6px;height:45px"><use href="#kettle"/></svg>
<svg class="p" style="left:180.3px;top:91.7px;width:63.7px;height:45px"><use href="#sign"/></svg>
<div class="fl">Ballywire Media © 2024</div><div class="fr">www.ballywiremedia.ie</div>
</div>

<div class="c x4 y3">
<div class="l">OUR STORY</div><div class="l" style="left:129.4px">CASE STUDIES</div><div class="lg"><b>BW</b><i>MEDIA</i></div>
<div class="h" style="top:37.2px">Ballywire<br>Multimedia<br>Case Study</div>
<div class="d" style="left:111.4px;top:26px;height:108px"></div>
<div class="s" style="top:95.3px;font-size:4.1px;line-height:5px">North &amp; East Housing<br>Association</div>
<div class="bd" style="left:12px;top:108.6px;width:80.2px;font-size:2.8px;line-height:3.55px">The North and East Housing Association is a registered charity in Ireland. The organisation has developed from a small-scale, mainly voluntary organisation into a well-established housing provider with a proven track record in the delivery of high-quality homes, comprehensive housing services and tenant supports.</div>
<svg class="p" style="left:129.4px;top:31px;width:98.3px;height:63.3px"><use href="#aerial"/></svg>
<div class="t" style="left:133.5px;top:85px;font-size:5px;color:#e6e6e6">Development at Scarlet St, Drogheda</div>
<div class="bd" style="left:129.4px;top:105px;width:97px;font-size:2.8px;line-height:3.5px">North &amp; East Association believes that everyone has a right to a quality home, within the community and strives to achieve this objective by working in partnership with local authorities as well as community and voluntary organisations.</div>
<div class="bd" style="left:129.4px;top:123.4px;width:97px;font-size:2.8px;line-height:3.5px">Ballywire has produced ongoing content on developments, openings and training programmes for the association.</div>
<div class="fl">Ballywire Media © 2024</div><div class="fr">www.ballywiremedia.ie</div>
</div>

<div class="c x5 y3 w">
<svg class="ph" viewBox="0 0 278 156"><rect width="278" height="156" fill="#191919"/>
<g style="filter:blur(1.4px)">
<rect x="0" y="0" width="60" height="156" fill="#0c0b0a"/><rect x="180" y="0" width="98" height="100" fill="#242424"/><rect x="110" y="0" width="70" height="100" fill="#1e1e1e"/>
<path d="M66 0H112L118 26L108 74L84 94L52 78Z" fill="#5c4030"/><path d="M92 30L116 24L110 70L82 92L66 86Z" fill="#2a1d14"/>
<path d="M0 0H66L56 70L62 112L0 140Z" fill="#0c0a08"/>
</g>
<rect x="137" y="21" width="56" height="38" rx="3" fill="#0d0d0e" style="filter:blur(.5px)"/><rect x="142" y="27" width="44" height="26" fill="#bfc7c2" style="filter:blur(.7px)"/><rect x="142" y="27" width="44" height="8" fill="#5a6360" style="filter:blur(.7px)"/><g fill="#333"><rect x="154" y="38" width="2" height="7"/><rect x="164" y="36" width="2" height="8"/><rect x="172" y="38" width="2" height="7"/></g>
<g style="filter:blur(.7px)"><path d="M175 44L204 48L210 72L188 98L160 78Z" fill="#101011"/><path d="M205 46L220 14M214 52L236 22" stroke="#0d0d0e" stroke-width="2.2"/><path d="M130 70H170L166 96L130 92Z" fill="#222224"/><rect x="148" y="58" width="8" height="14" fill="#161616"/></g>
</svg>
<div class="ov" style="background:linear-gradient(180deg,rgba(0,0,0,0) 50%,rgba(0,0,0,.8) 72%,#070707 88%)"></div>
<div class="l">OUR STORY</div><div class="lg lw"><b>BW</b><i>MEDIA</i></div>
<div class="num" style="top:29px;font-size:52px">03</div><div class="big" style="letter-spacing:1.5px">Testimonials</div>
<div class="fl">Ballywire Media © 2024</div><div class="fr">www.ballywiremedia.ie</div>
</div>

<!-- R4 -->
<div class="c x1 y4">
<div class="l">OUR STORY</div><div class="l" style="left:92.6px">TESTIMONIALS</div><div class="lg"><b>BW</b><i>MEDIA</i></div>
<div class="h2">Client Trust<br>in Ballywire<br>Media</div>
<div class="s" style="top:102.5px;">Gaelic Athletic Association</div>
<svg class="p" style="left:90px;top:29.7px;width:77.6px;height:53.3px"><use href="#gaa1"/></svg>
<svg class="p" style="left:90px;top:85px;width:48.5px;height:53.7px"><use href="#gaa2"/></svg>
<svg class="p" style="left:140px;top:85px;width:27.6px;height:23.3px"><use href="#gaa3"/></svg>
<svg class="p" style="left:140px;top:110px;width:27.6px;height:28.7px"><use href="#gaa1"/></svg>
<div class="sh" style="left:178.3px;top:37.8px">Ballywire Media &amp; the GAA have<br>partnered in the area of content<br>generation and match-day<br>presentation for over a decade</div>
<div class="bd" style="left:178.3px;top:70px;width:85.4px;font-size:2.6px;line-height:3.1px">This content is used across all of our digital channels and features prominently on our platform screens at Croke Park and in our other stadia as part of online engagement.</div>
<div class="bd" style="left:178.3px;top:82.4px;width:85.4px;font-size:2.6px;line-height:3.1px">Our collaboration starts at concept stage, working through various iterations of different projects before we agree on sign-off, it serves best served to be edited for a diverse set of what they do for us.</div>
<div class="bd" style="left:178.3px;top:95px;width:85.4px;font-size:2.6px;line-height:3.1px">They are punctual, reliable, work to tight deadlines and deliver work best tailored on short notice where the need arises.</div>
<div class="bd" style="left:178.3px;top:104.4px;width:85.4px;font-size:2.6px;line-height:3.1px">There have had a continuous rise in our digital expansion since our first foray into social and digital media, helping us to reach our membership both at home and abroad. Over the period of this partnership they have developed an innate understanding of the nuanced needs of the organisation and as a result of many of our most important events keeping us by tackling content and stats it is our valid and trusted partner.</div>
<div class="t" style="left:178.3px;top:132px;font-size:3.25px;font-weight:700;color:#444c58">– Alan Milton / GAA Director of Communications</div>
<div class="fl">Ballywire Media © 2024</div><div class="fr">www.ballywiremedia.ie</div>
</div>

<div class="c x2 y4">
<div class="l">OUR STORY</div><div class="l" style="left:92.6px">TESTIMONIALS</div><div class="lg"><b>BW</b><i>MEDIA</i></div>
<div class="h2">Client Trust<br>in Ballywire<br>Media</div>
<div class="s" style="top:101.5px;font-size:5.4px;line-height:6.4px">Guinness Area 22<br>Case study</div>
<svg class="p" style="left:90px;top:29.7px;width:77.6px;height:53.3px"><use href="#ball"/></svg>
<svg class="p" style="left:90px;top:85px;width:43.6px;height:53.7px"><use href="#panel"/></svg>
<svg class="p" style="left:135px;top:85px;width:32.6px;height:23.3px" viewBox="0 0 33 23"><rect width="33" height="23" fill="#050505"/><text x="16.5" y="17" font-size="5.5" text-anchor="middle" fill="#dcd4bd" font-family="Liberation Serif">GUINNESS</text><path d="M13 3H20L19 10H14Z" fill="#a88a3e"/></svg>
<svg class="p" style="left:135px;top:110px;width:32.6px;height:28.7px" viewBox="0 0 33 29"><rect width="33" height="29" fill="#5a7ea4"/><g style="filter:blur(.6px)"><rect y="18" width="33" height="11" fill="#3e4c3c"/><rect x="0" y="10" width="33" height="8" fill="#8a9096"/><rect x="12" y="8" width="8" height="20" fill="#14161a"/><circle cx="16" cy="6" r="3" fill="#8a6a54"/></g></svg>
<div class="sh" style="left:178px;top:37.8px">The Ballywire crew managed and<br>facilitated the "Area22" online<br>amplification via live broadcasts</div>
<div class="bd" style="left:178px;top:64.5px;width:86px;font-size:2.6px;line-height:2.9px">"I was lucky enough to collaborate with Ballywire at Area 22 on the Rugby sponsorship activation. The team were an exceptional supplier from the outset in planning and working with us throughout. Ballywire acted as a true agency to brand partner, as secured the media buy, which proved so valuable and helped bring to a highly engaging series of live and on-demand broadcasts.</div>
<div class="bd" style="left:178px;top:89px;width:86px;font-size:2.6px;line-height:3px">The Ballywire contribution to the delivery of the Area 22 idea is pioneering, customer experience was recognised. Without the Ballywire team's implemented partnership with the Rugby's Six Nations, and it subsequently would winning experience would not have been delivered in time.</div>
<div class="bd" style="left:178px;top:113px;width:86px;font-size:2.6px;line-height:3px">"The programme of events undoubtedly put a new perspective for the Rugby customer interaction and match-day experience and was the start of the greatest brand experience that the brand is famous for today.</div>
<div class="t" style="left:178px;top:132.7px;font-size:3.1px;font-weight:700;color:#444c58">– Gareth Weiss, Digital Marketing Agency Account Director</div>
<div class="fl">Ballywire Media © 2024</div><div class="fr">www.ballywiremedia.ie</div>
</div>

<div class="c x3 y4">
<div class="l">OUR STORY</div><div class="l" style="left:96.4px">TESTIMONIALS</div><div class="lg"><b>BW</b><i>MEDIA</i></div>
<div class="h2">Client Trust<br>in Ballywire<br>Media</div>
<div class="s" style="top:101.3px;font-size:5.4px;line-height:6px">North &amp; East Housing<br>Association</div>
<svg class="p" style="left:94px;top:29.7px;width:77.8px;height:53.3px" viewBox="0 0 78 53"><rect width="78" height="53" fill="url(#skyb)"/><g style="filter:blur(.6px)"><ellipse cx="14" cy="28" rx="14" ry="6" fill="#fff"/><ellipse cx="55" cy="22" rx="18" ry="7" fill="#e8eef4"/><path d="M16 44V28L28 20L48 24V44Z" fill="#9a4e36"/><rect x="60" y="26" width="18" height="18" fill="#8e3f30"/><rect y="44" width="78" height="9" fill="#6c6c66"/><rect x="0" y="38" width="14" height="6" fill="#3a4a34"/><rect x="48" y="30" width="12" height="14" fill="#cfd2d2"/></g></svg>
<svg class="p" style="left:94px;top:85px;width:43.8px;height:53.7px" viewBox="0 0 44 54"><rect width="44" height="54" fill="#7aa6cf"/><g style="filter:blur(.6px)"><path d="M0 24L12 16H30L44 22V38H0Z" fill="#4e525a"/><rect x="0" y="24" width="44" height="14" fill="#a8aaa8"/><rect y="38" width="44" height="16" fill="#96948c"/><rect x="6" y="26" width="5" height="6" fill="#2a2c30"/></g></svg>
<svg class="p" style="left:139.3px;top:85px;width:32.5px;height:23.3px"><use href="#aerial"/></svg>
<svg class="p" style="left:139.3px;top:110px;width:32.5px;height:28.7px" viewBox="0 0 33 29"><rect width="33" height="29" fill="#a0b2c2"/><g style="filter:blur(.6px)"><path d="M2 10L12 3H26L32 10V22H2Z" fill="#52565c"/><rect x="2" y="10" width="30" height="12" fill="#a6a8a6"/><rect x="14" y="12" width="8" height="10" fill="#2a5a9a"/><rect y="22" width="33" height="7" fill="#8c8c84"/></g></svg>
<div class="sh" style="left:183px;top:38px;line-height:6.5px">Ballywire Team video production<br>for North &amp; East Housing<br>Association</div>
<div class="bd" style="left:183px;top:61px;width:75px;font-size:2.6px;line-height:3px">It is a real pleasure working with the Ballywire team on the production of videos relating to our new housing schemes.</div>
<div class="bd" style="left:183px;top:75px;width:75px;font-size:2.6px;line-height:3px">The team listens to our brief and moves from start to finish, and what we were trying to achieve, whilst they contribute with good ideas and suggestions.</div>
<div class="bd" style="left:183px;top:92px;width:75px;font-size:2.6px;line-height:3px">They give on-going support throughout the whole process and are knowledgeable, flexible and responsive at all times.</div>
<div class="bd" style="left:183px;top:107.5px;width:75px;font-size:2.6px;line-height:3px">We have used the videos on our website and for presentation and training purposes and have received very positive feedback. We've all we're delighted with the whole process.</div>
<div class="t" style="left:183px;top:129.2px;font-size:3.1px;color:#444c58">– Tina Hynes, Project Manager</div>
<div class="fl">Ballywire Media © 2024</div><div class="fr">www.ballywiremedia.ie</div>
</div>

<div class="c x4 y4 w">
<svg class="ph" viewBox="0 0 278 156"><rect width="278" height="156" fill="#4c3726"/>
<g style="filter:blur(1px)">
<rect width="278" height="60" fill="#6e4e30"/><rect x="90" y="0" width="188" height="20" fill="#5c4028"/><path d="M200 0H278V60L230 56Z" fill="#7a5232"/>
<g fill="#a8a698"><rect x="30" y="3" width="26" height="15"/><rect x="62" y="3" width="30" height="15"/><rect x="100" y="3" width="14" height="10"/></g>
<rect x="0" y="0" width="10" height="90" fill="#7a3e28"/><rect x="12" y="0" width="18" height="60" fill="#3e2c1e"/>
<rect x="84" y="10" width="14" height="50" fill="#0e0d0c"/><rect x="143" y="10" width="8" height="55" fill="#e8e8e4"/><path d="M180 0L220 52L210 58L172 8Z" fill="#e8e6de"/><rect x="172" y="8" width="6" height="52" fill="#d8d8d0"/>
<rect x="0" y="55" width="278" height="60" fill="#4a3c30"/><rect x="60" y="60" width="200" height="30" fill="#64523e"/>
<rect x="56" y="38" width="22" height="22" fill="#e8b050"/><rect x="60" y="42" width="14" height="14" fill="#f8e0a0"/>
<path d="M96 50L120 90L114 92L90 52Z" fill="#2e8060"/>
<rect x="160" y="60" width="80" height="3" fill="#cbbfa8"/><rect x="262" y="30" width="12" height="70" fill="#a8a89c"/>
<g fill="#141110"><rect x="48" y="70" width="18" height="40"/><rect x="122" y="72" width="14" height="36"/><rect x="139" y="74" width="14" height="34"/><rect x="190" y="82" width="14" height="30"/><rect x="196" y="66" width="10" height="18" fill="#7a8892"/><rect x="168" y="88" width="16" height="24"/><rect x="230" y="70" width="20" height="30" fill="#221c18"/></g>
<g fill="#b08a68"><circle cx="56" cy="66" r="4"/><circle cx="128" cy="68" r="4"/><circle cx="146" cy="70" r="4"/><circle cx="197" cy="62" r="3.5"/><circle cx="198" cy="80" r="4" fill="#3a2a20"/></g>
<path d="M68 66L92 60L96 90L72 96Z" fill="#1c1c1c"/><rect x="122" y="96" width="30" height="18" fill="#1e2a30"/>
</g></svg>
<div class="ov" style="background:linear-gradient(180deg,rgba(0,0,0,0) 58%,rgba(0,0,0,.85) 76%,#0a0807 88%)"></div>
<div class="wm" style="left:228.5px;top:11.7px;font-size:5px;letter-spacing:.4px;transform:scaleX(1.2)">BALLYWIRE</div><div class="wm" style="right:10px;top:17px;font-size:3.6px;letter-spacing:1px">MEDIA</div>
<div class="pill pb" style="left:11.9px;width:53.2px">Social</div>
<div class="pill pb" style="left:70px;width:81.5px">Live Action</div>
<div class="pill pb" style="left:156px;width:111.5px">Hybrid Content</div>
<div class="fl">Ballywire Media © 2024</div><div class="fr">www.ballywiremedia.ie</div>
</div>

<div class="c x5 y4">
<div class="l">OUR STORY</div><div class="l" style="left:133.3px">SOCIAL, LIVE ACTION &amp; HYBRID CONTENT</div><div class="lg"><b>BW</b><i>MEDIA</i></div>
<div class="h" style="top:50.5px;font-size:12.55px;line-height:13px">Brand Ambassador<br>Social Content</div>
<div class="bd" style="left:12px;top:85.2px;width:80px;font-size:3.05px;line-height:4.9px">Got high profile ambassadors involved in your campaign? Are you using production techniques like <u>this</u>? If not? Why not?</div>
<svg class="p" style="left:135px;top:33.3px;width:51px;height:62.4px"><use href="#fb"/></svg>
<svg class="p" style="left:187.7px;top:33.3px;width:58px;height:40px" viewBox="0 0 58 40"><rect width="58" height="40" fill="#6a705c"/><g style="filter:blur(.5px)"><path d="M0 8L14 4L22 24L14 40H0Z" fill="#e4e4e6"/><circle cx="36" cy="12" r="8" fill="#d8dade"/><path d="M20 20L48 18L52 40H20Z" fill="#e6e6e8"/><path d="M48 8L58 6V40H50Z" fill="#1f2f52"/><rect x="32" y="26" width="12" height="8" fill="#b02a2c"/></g></svg>
<svg class="p" style="left:135px;top:97.7px;width:51px;height:35px" viewBox="0 0 51 35"><rect width="51" height="35" fill="#5f8a4c"/><g style="filter:blur(.5px)"><path d="M4 0H46L48 22L28 30L6 24Z" fill="#1a2848"/><ellipse cx="28" cy="16" rx="10" ry="7" fill="#8a5030" transform="rotate(15 28 16)"/><rect x="10" y="20" width="6" height="14" fill="#c23034"/><path d="M36 18L50 22L44 35H34Z" fill="#eee"/></g></svg>
<svg class="p" style="left:187.7px;top:75.3px;width:58px;height:57.4px"><use href="#fb"/></svg>
<div class="fl">Ballywire Media © 2024</div><div class="fr">www.ballywiremedia.ie</div>
</div>

<!-- R5 -->
<div class="c x1 y5">
<div class="l">OUR STORY</div><div class="lg"><b>BW</b><i>MEDIA</i></div>
<div style="position:absolute;left:60px;top:22.3px;width:157.8px;height:108px;background:#0c0c0d;border-radius:3px 3px 0 0"></div>
<svg style="position:absolute;left:65.8px;top:37.3px" width="146.6" height="82.4" viewBox="0 0 146 82"><rect width="146" height="82" fill="#6e6e66"/>
<g style="filter:blur(.7px)">
<rect x="0" y="0" width="146" height="14" fill="#3a3a38"/><rect x="6" y="8" width="52" height="50" fill="#7e8274"/><rect x="56" y="10" width="30" height="50" fill="#929e92"/><rect x="86" y="8" width="50" height="50" fill="#868882"/>
<rect x="38" y="26" width="12" height="28" fill="#8a8e80"/><rect x="0" y="54" width="146" height="8" fill="#cfcfcb"/><rect x="0" y="60" width="146" height="22" fill="#3a1e1e"/>
<path d="M4 82L6 58Q10 44 22 42L44 62L70 70L68 82Z" fill="#5e1f34"/><ellipse cx="28" cy="30" rx="8" ry="10" fill="#a08068"/><ellipse cx="24" cy="23" rx="8" ry="5" fill="#3a2a1e"/><rect x="36" y="68" width="36" height="14" fill="#1a2036"/>
<path d="M142 82L140 55Q134 44 116 44L100 64L80 72L84 82Z" fill="#16161a"/><path d="M116 44L138 48L138 60L118 62Z" fill="#e4e4e4"/><ellipse cx="112" cy="30" rx="8" ry="10" fill="#b08a70"/><ellipse cx="116" cy="24" rx="8" ry="5" fill="#2a201a"/><rect x="76" y="66" width="26" height="16" fill="#161414"/>
</g>
<rect x="58" y="14" width="24" height="36" fill="#a8b0a8" opacity=".4"/>
<text x="70" y="20" font-size="5" text-anchor="middle" fill="#e6e6e6" font-family="Liberation Serif">GAA</text>
<text x="70" y="33" font-size="4" text-anchor="middle" fill="#f4f2a8" font-weight="700" font-family="Liberation Sans">TAILTEANN</text>
<text x="70" y="38" font-size="4" text-anchor="middle" fill="#f4f2a8" font-weight="700" font-family="Liberation Sans">CUP</text>
<rect x="0" y="0" width="146" height="8" fill="#000" opacity=".4"/>
<text x="2" y="5" font-size="2.8" fill="#ddd" font-family="Liberation Sans">GAA Ambassador Content Case Study</text>
<rect x="0" y="71" width="146" height="11" fill="#000" opacity=".55"/>
<rect x="2" y="70" width="64" height=".7" fill="#d22"/><rect x="66" y="70" width="78" height=".7" fill="#999"/>
<path d="M5 75l2 1.5-2 1.5z M16 75h1v3h-1z M19 75l2 1.5-2 1.5z" fill="#eee"/><circle cx="124" cy="76.5" r="1" fill="#eee"/><circle cx="130" cy="76.5" r="1" fill="#eee"/><circle cx="136" cy="76.5" r="1" fill="#eee"/>
</svg>
<div style="position:absolute;left:41.7px;top:130.3px;width:195.2px;height:1.5px;background:linear-gradient(90deg,#b8bcc0,#e4e6e8 50%,#b8bcc0)"></div>
<div style="position:absolute;left:41.7px;top:131.8px;width:195.2px;height:1.8px;background:#6a6c70;border-radius:0 0 50% 50%"></div>
<div class="t" style="left:133px;top:126px;font-size:2.2px;color:#888">MacBook</div>
<div class="fl">Ballywire Media © 2024</div><div class="fr">www.ballywiremedia.ie</div>
</div>

<div class="c x2 y5">
<div class="l">OUR STORY</div><div class="l" style="left:106px">SOCIAL, LIVE ACTION &amp; HYBRID CONTENT</div><div class="lg"><b>BW</b><i>MEDIA</i></div>
<div class="h" style="top:50.5px;font-size:13.1px;line-height:13px">Video News<br>Release</div>
<div class="bd" style="left:12px;top:85px;width:78px;font-size:3.05px;line-height:4.2px">Got a major company announcement and need one video turned around quickly? These asked us to do just that, as you will see <u>here</u>.</div>
<svg class="p" style="left:106.4px;top:33.7px;width:87.2px;height:49px"><use href="#vid1"/></svg>
<svg class="p" style="left:196px;top:33.7px;width:52.4px;height:49px"><use href="#vid2"/></svg>
<svg class="p" style="left:106.4px;top:85px;width:53.6px;height:49px"><use href="#vid3"/></svg>
<svg class="p" style="left:161.9px;top:85px;width:86.5px;height:49px"><use href="#vid4"/></svg>
<div class="fl">Ballywire Media © 2024</div><div class="fr">www.ballywiremedia.ie</div>
</div>

<div class="c x3 y5">
<div class="l">OUR STORY</div><div class="l" style="left:64px">SOCIAL, LIVE ACTION &amp; HYBRID CONTENT</div><div class="lg"><b>BW</b><i>MEDIA</i></div>
<div class="h" style="top:28px;font-size:12.9px;line-height:14px">Live Hybrid Events<br>&amp; Social Content</div>
<svg class="p" style="left:12.2px;top:62.3px;width:108.8px;height:66.7px" viewBox="0 0 109 67"><rect width="109" height="67" fill="#4e3522"/><g style="filter:blur(.6px)"><rect width="109" height="20" fill="#6a4e36"/><rect x="0" y="20" width="80" height="10" fill="#33220f"/><circle cx="18" cy="22" r="7" fill="#e2b070"/><circle cx="40" cy="20" r="5" fill="#b08a5a"/><rect y="50" width="109" height="17" fill="#241a12"/>
<path d="M6 67L10 40L24 34L36 44L48 67Z" fill="#100c0a"/><ellipse cx="20" cy="30" rx="6" ry="8" fill="#2e1f14"/><path d="M30 44L48 42L50 48L32 50Z" fill="#5a2e18"/>
<path d="M82 67L78 30L92 22L108 26V67Z" fill="#d4d2c8"/><ellipse cx="82" cy="16" rx="8" ry="9" fill="#a87c60"/><path d="M66 12L88 4L92 12Z" fill="#15151a"/><ellipse cx="84" cy="7" rx="9" ry="5" fill="#15151a"/><path d="M58 30H84V54H64Z" fill="#16181c"/></g></svg>
<div class="sh" style="left:156.5px;top:29.3px;font-size:4px;line-height:4px">Planning a live hybrid event?</div>
<div class="bx" style="top:37.3px;height:17px">All is one thing, but what content will be shown in the rest of your event and in your live stream?</div>
<div class="bx" style="top:56.3px;height:17px">How will it appear on social? Landscape or portrait formats?</div>
<div class="bx" style="top:75.3px;height:17px">Red carpet &amp; Behind the Scenes? Award winners feedback?</div>
<div class="sh" style="left:156.5px;top:96.3px;font-size:4px;line-height:4px">We got you !</div>
<div class="bx" style="top:103.7px;height:29.6px">That's what we do for one of Ireland's biggest events the PwC Gl Stars as you will see here.<br><br>Not forgetting another high profile ceremony the Champions XI which you can see here.</div>
<div class="fl">Ballywire Media © 2024</div><div class="fr">www.ballywiremedia.ie</div>
</div>

<div class="c x4 y5 w" style="background:#1b365d">
<div class="l">OUR STORY</div><div class="lg lw" style="color:#1b365d"><b>BW</b><i>MEDIA</i></div>
<div class="t" style="left:12.2px;top:59.3px;font-size:14.5px;line-height:16px;color:#f4f6f8;-webkit-text-stroke:.15px #fff">What type of <span style="color:#37b0d4;-webkit-text-stroke:.15px #37b0d4">message</span><br>do you want to communicate?</div>
<div class="fl">Ballywire Media © 2024</div><div class="fr">www.ballywiremedia.ie</div>
</div>

<div class="c x5 y5 w" style="background:#0a0a0c">
<svg class="ph" viewBox="0 0 278 156">
<defs><linearGradient id="fd" x1="0" y1="0" x2="0" y2="1"><stop offset=".45" stop-color="#000" stop-opacity="0"/><stop offset=".72" stop-color="#000" stop-opacity=".85"/><stop offset=".88" stop-color="#060606"/></linearGradient></defs>
<rect x="0" width="92" height="156" fill="#12225c"/>
<g style="filter:blur(1.2px)"><rect x="0" width="92" height="40" fill="#1a2e86"/><rect x="0" y="50" width="92" height="50" fill="#0e1638"/><circle cx="13" cy="13" r="5" fill="#d8947a"/><circle cx="31" cy="2" r="6" fill="#e8f0f8"/><circle cx="3" cy="35" r="4" fill="#6a80a8"/><path d="M44 52L92 76V90L36 68Z" fill="#3a3a3e"/><ellipse cx="30" cy="46" rx="17" ry="17" fill="#1e2124"/><ellipse cx="30" cy="46" rx="13" ry="13" fill="#36383c"/><path d="M58 68L78 84L76 156H60L66 96Z" fill="#0c0c0e"/></g>
<rect x="92" width="94" height="156" fill="#24160d"/>
<g style="filter:blur(1.2px)"><rect x="92" width="40" height="25" fill="#efe8e2"/><rect x="140" width="46" height="60" fill="#443018"/><rect x="92" y="30" width="20" height="30" fill="#6e5036"/><rect x="160" y="0" width="10" height="30" fill="#22180e"/>
<path d="M100 156L108 92L135 72L162 88L180 156Z" fill="#0b0a0e"/><path d="M134 84L152 30L166 12L172 28L162 54L180 72L172 78L146 64Z" fill="#5e3626"/><path d="M158 28L146 12L160 8L172 16Z" fill="#a87458"/><rect x="160" y="66" width="16" height="8" fill="#b25a6a" transform="rotate(30 168 70)"/><ellipse cx="138" cy="88" rx="20" ry="12" fill="#2e2c32"/></g>
<rect x="186" width="92" height="156" fill="#263436"/>
<g style="filter:blur(1.2px)"><rect x="186" width="40" height="40" fill="#36423c"/><rect x="186" y="30" width="10" height="60" fill="#6a3c2c"/><path d="M186 90L196 50L204 90L186 110Z" fill="#2c5a94"/><path d="M262 40L278 34V96L250 90Z" fill="#2e66a0"/>
<ellipse cx="256" cy="50" rx="22" ry="28" fill="#3a2216"/><ellipse cx="268" cy="36" rx="16" ry="22" fill="#5e3a26"/><ellipse cx="264" cy="10" rx="20" ry="14" fill="#15100c"/><path d="M262 62Q272 72 278 64V52L262 54Z" fill="#fff"/>
<path d="M196 156L200 112L226 104L256 114L262 156Z" fill="#696a6c"/>
<ellipse cx="218" cy="56" rx="19" ry="24" fill="#c09670"/><path d="M200 42Q216 28 238 42L244 90L232 84L232 52Q216 46 204 60L196 82Z" fill="#6a4a30"/><path d="M208 68Q220 62 232 68L226 94L212 92Z" fill="#6e4a2e"/><path d="M210 66Q220 78 230 66Z" fill="#f4f0ea"/></g>
<rect width="278" height="156" fill="url(#fd)"/>
<g fill="#fff" opacity=".09" font-family="Liberation Sans" font-weight="700" font-size="112"><text x="25" y="164">1</text><text x="107" y="162">2</text><text x="198" y="164">3</text></g>
</svg>
<div class="l">OUR STORY</div>
<div class="wm" style="left:228.5px;top:11.7px;font-size:5px;letter-spacing:.4px;transform:scaleX(1.2);color:#e4e4e4">BALLYWIRE</div><div class="wm" style="right:10px;top:17px;font-size:3.6px;letter-spacing:1px;color:#e4e4e4">MEDIA</div>
<div class="t lb" style="left:25px">Inform</div>
<div class="t lb" style="left:118.5px">Inspire</div>
<div class="t lb" style="left:207.5px">Involve</div>
<div class="fl">Ballywire Media © 2024</div><div class="fr">www.ballywiremedia.ie</div>
</div>

</body></html>
